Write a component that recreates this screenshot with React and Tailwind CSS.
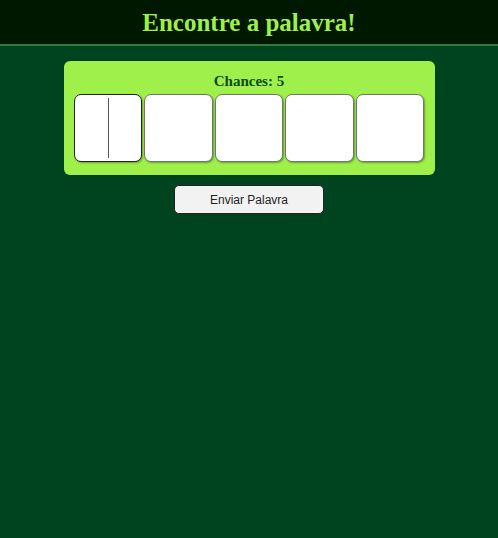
import React from 'react';

export default function App() {
  const letters = [0, 1, 2, 3, 4];

  return (
    <div className="min-h-screen bg-[#00431f]">
      <header className="h-[46px] bg-[#001700] border-b-2 border-[#2f7a3a] flex items-center justify-center">
        <h1 className="text-[25px] font-bold text-[#9ef04a] font-['Liberation_Serif',serif] leading-none">
          Encontre a palavra!
        </h1>
      </header>

      <div className="flex flex-col items-center pt-[15px]">
        <div className="w-[371px] bg-[#a0f04b] rounded-[6px] px-[10px] pt-[11px] pb-[13px]">
          <h2 className="text-center text-[15px] font-bold text-[#0d4a1a] font-['Liberation_Serif',serif] leading-[18px] mb-[4px]">
            Chances: 5
          </h2>
          <div className="flex gap-[2px]">
            {letters.map((i) => (
              <div key={i} className="relative flex-1 min-w-0">
                <input
                  maxLength={1}
                  className={`w-full h-[68px] bg-white rounded-[7px] text-center text-[48px] outline-none shadow-[1px_1px_2px_rgba(0,0,0,0.35)] ${
                    i === 0 ? 'border-[1.5px] border-[#222]' : 'border border-[#6b7a66]'
                  }`}
                />
                {i === 0 && (
                  <span className="absolute left-1/2 top-[4px] h-[60px] w-px bg-[#555]" />
                )}
              </div>
            ))}
          </div>
        </div>

        <button className="mt-[10px] w-[150px] h-[29px] bg-[#f2f2f2] border border-[#222] rounded-[5px] text-[12px] text-[#222] font-['Liberation_Sans',sans-serif]">
          Enviar Palavra
        </button>
      </div>
    </div>
  );
}
